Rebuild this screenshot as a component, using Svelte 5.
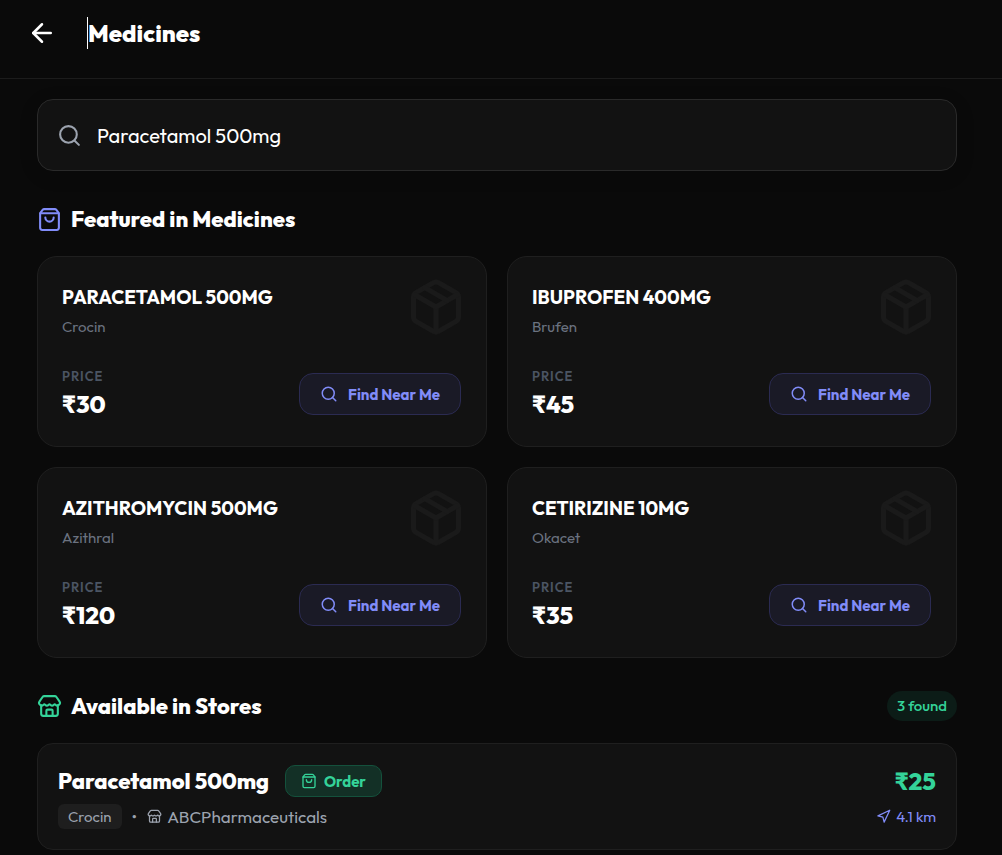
<script lang="ts">
  interface Medicine {
    name: string
    brand: string
    price: number
  }

  interface Offer extends Medicine {
    store: string
    distance: string
  }

  let query = $state('Paracetamol 500mg')

  const featured: Medicine[] = [
    { name: 'PARACETAMOL 500MG', brand: 'Crocin', price: 30 },
    { name: 'IBUPROFEN 400MG', brand: 'Brufen', price: 45 },
    { name: 'AZITHROMYCIN 500MG', brand: 'Azithral', price: 120 },
    { name: 'CETIRIZINE 10MG', brand: 'Okacet', price: 35 }
  ]

  const totalFound = 3
  const offers: Offer[] = [
    {
      name: 'Paracetamol 500mg',
      brand: 'Crocin',
      price: 25,
      store: 'ABCPharmaceuticals',
      distance: '4.1 km'
    }
  ]

  const icons = {
    back: ['m12 19-7-7 7-7', 'M19 12H5'],
    search: ['M19 11a8 8 0 1 1-16 0 8 8 0 0 1 16 0Z', 'm21 21-4.3-4.3'],
    bag: [
      'M16 10a4 4 0 0 1-8 0',
      'M3.103 6.034h17.794',
      'M3.4 5.467a2 2 0 0 0-.4 1.2V20a2 2 0 0 0 2 2h14a2 2 0 0 0 2-2V6.667a2 2 0 0 0-.4-1.2l-2-2.667A2 2 0 0 0 17 2H7a2 2 0 0 0-1.6.8z'
    ],
    box: [
      'M11 21.73a2 2 0 0 0 2 0l7-4A2 2 0 0 0 21 16V8a2 2 0 0 0-1-1.73l-7-4a2 2 0 0 0-2 0l-7 4A2 2 0 0 0 3 8v8a2 2 0 0 0 1 1.73z',
      'M12 22V12',
      'M3.29 7 12 12l8.71-5',
      'm7.5 4.27 9 5.15'
    ],
    store: [
      'M15 21v-5a1 1 0 0 0-1-1h-4a1 1 0 0 0-1 1v5',
      'M17.774 10.31a1.12 1.12 0 0 0-1.549 0 2.5 2.5 0 0 1-3.451 0 1.12 1.12 0 0 0-1.548 0 2.5 2.5 0 0 1-3.452 0 1.12 1.12 0 0 0-1.549 0 2.5 2.5 0 0 1-3.77-3.248l2.889-4.184A2 2 0 0 1 7 2h10a2 2 0 0 1 1.653.873l2.895 4.192a2.5 2.5 0 0 1-3.774 3.244',
      'M4 10.95V19a2 2 0 0 0 2 2h12a2 2 0 0 0 2-2v-8.05'
    ],
    pointer: ['M3 11 22 2l-9 19-2-8-8-2Z']
  }
</script>

{#snippet icon(name: keyof typeof icons, size: number)}
  <svg width={size} height={size} viewBox="0 0 24 24" aria-hidden="true">
    {#each icons[name] as d}
      <path {d} />
    {/each}
  </svg>
{/snippet}

<div class="page">
  <header>
    <button class="back" aria-label="Back">{@render icon('back', 30)}</button>
    <h1>Medicines</h1>
  </header>

  <main>
    <div class="content">
      <label class="search">
        {@render icon('search', 25)}
        <input type="text" aria-label="Search medicines" bind:value={query} />
      </label>

      <section>
        <div class="section-head featured">
          {@render icon('bag', 25)}
          <h2>Featured in Medicines</h2>
        </div>
        <div class="grid">
          {#each featured as item}
            <article class="card">
              <div class="watermark">{@render icon('box', 60)}</div>
              <h3>{item.name}</h3>
              <p class="brand">{item.brand}</p>
              <div class="card-foot">
                <div>
                  <div class="price-label">PRICE</div>
                  <div class="price">₹{item.price}</div>
                </div>
                <button class="find">{@render icon('search', 18)} Find Near Me</button>
              </div>
            </article>
          {/each}
        </div>
      </section>

      <section>
        <div class="section-head stores">
          {@render icon('store', 25)}
          <h2>Available in Stores</h2>
          <span class="count">{totalFound} found</span>
        </div>
        {#each offers as offer}
          <article class="offer">
            <div class="offer-row">
              <h3>{offer.name}</h3>
              <button class="order">{@render icon('bag', 16)} Order</button>
              <span class="offer-price">₹{offer.price}</span>
            </div>
            <div class="offer-row meta">
              <span class="tag">{offer.brand}</span>
              <span class="dot">•</span>
              <span class="store-name">{@render icon('store', 15)} {offer.store}</span>
              <span class="distance">{@render icon('pointer', 15)} {offer.distance}</span>
            </div>
          </article>
        {/each}
      </section>
    </div>
  </main>
</div>

<style>
  :global(body) {
    background: #0a0a0a;
  }
  .page {
    min-height: 100vh;
    box-sizing: border-box;
    background: #0a0a0a;
    color: #fff;
    font-family: Outfit, Lato, sans-serif;
  }
  h1,
  h2,
  h3,
  p {
    margin: 0;
  }
  button {
    font-family: inherit;
    cursor: pointer;
  }
  svg {
    flex: none;
    fill: none;
    stroke: currentColor;
    stroke-width: 2;
    stroke-linecap: round;
    stroke-linejoin: round;
  }
  header {
    display: flex;
    align-items: center;
    gap: 30px;
    padding: 17px 27px 29px;
    border-bottom: 1px solid #1c1c1c;
  }
  .back {
    display: flex;
    padding: 0;
    border: 0;
    background: none;
    color: #fff;
  }
  h1 {
    border-left: 1px solid #fff;
    font-size: 24px;
    font-weight: 800;
    line-height: 32px;
  }
  main {
    padding: 20px 28px 0 20px;
  }
  .content {
    max-width: 920px;
    margin: 0 auto;
  }
  .search {
    display: flex;
    align-items: center;
    gap: 15px;
    padding: 19px;
    border: 1px solid #2a2a2a;
    border-radius: 16px;
    background: #121212;
    color: #9ca3af;
    box-shadow: 0 4px 20px rgba(0, 0, 0, 0.1);
  }
  .search input {
    flex: 1;
    min-width: 0;
    height: 32px;
    padding: 0;
    border: 0;
    outline: none;
    background: none;
    color: #fff;
    font-family: inherit;
    font-size: 20px;
  }
  .section-head {
    display: flex;
    align-items: center;
    gap: 9px;
    margin: 32px 0 21px;
  }
  .featured {
    color: #818cf8;
  }
  .stores {
    color: #34d399;
  }
  h2 {
    color: #fff;
    font-size: 22px;
    font-weight: 800;
    line-height: 32px;
  }
  .count {
    margin-left: auto;
    padding: 0 10px;
    border-radius: 15px;
    background: #0c1c17;
    font-size: 15px;
    font-weight: 500;
    line-height: 30px;
  }
  .grid {
    display: grid;
    grid-template-columns: 1fr 1fr;
    gap: 20px;
  }
  .card {
    position: relative;
    padding: 24px 25px 24px 24px;
    border: 1px solid #1f1f1f;
    border-radius: 20px;
    background: #121212;
  }
  .watermark {
    position: absolute;
    top: 20px;
    right: 20px;
    display: flex;
    color: #1a1a1a;
  }
  .card h3 {
    position: relative;
    font-size: 19px;
    font-weight: 700;
    line-height: 32px;
  }
  .brand {
    margin: 4px 0 29px;
    color: #6b7280;
    font-size: 15px;
    line-height: 20px;
  }
  .card-foot {
    display: flex;
    align-items: center;
    justify-content: space-between;
  }
  .price-label {
    color: #4b5563;
    font-size: 13px;
    font-weight: 600;
    letter-spacing: 1px;
    line-height: 20px;
  }
  .price {
    font-size: 24px;
    font-weight: 800;
    line-height: 36px;
  }
  .find {
    display: flex;
    align-items: center;
    gap: 10px;
    height: 42px;
    padding: 0 20px;
    border: 1px solid #2b2b52;
    border-radius: 14px;
    background: #1a1a26;
    color: #818cf8;
    font-size: 15px;
    font-weight: 700;
  }
  .offer {
    padding: 21px 20px 20px;
    border: 1px solid #1f1f1f;
    border-radius: 16px;
    background: #121212;
  }
  .offer-row {
    display: flex;
    align-items: center;
  }
  .offer h3 {
    margin-right: 16px;
    font-size: 22px;
    font-weight: 800;
    line-height: 32px;
  }
  .order {
    display: flex;
    align-items: center;
    gap: 7px;
    height: 32px;
    padding: 0 15px;
    border: 1px solid #14513c;
    border-radius: 10px;
    background: #133026;
    color: #34d399;
    font-size: 15px;
    font-weight: 700;
  }
  .offer-price {
    margin-left: auto;
    color: #34d399;
    font-size: 24px;
    font-weight: 800;
  }
  .meta {
    margin-top: 7px;
    color: #9ca3af;
    line-height: 25px;
  }
  .tag {
    padding: 0 10px;
    border-radius: 6px;
    background: #1e1e1e;
    font-size: 15px;
  }
  .dot {
    margin: 0 10px;
    font-size: 17px;
  }
  .store-name,
  .distance {
    display: flex;
    align-items: center;
    gap: 5px;
  }
  .store-name {
    font-size: 17px;
  }
  .distance {
    margin-left: auto;
    color: #818cf8;
    font-size: 15px;
  }
</style>
